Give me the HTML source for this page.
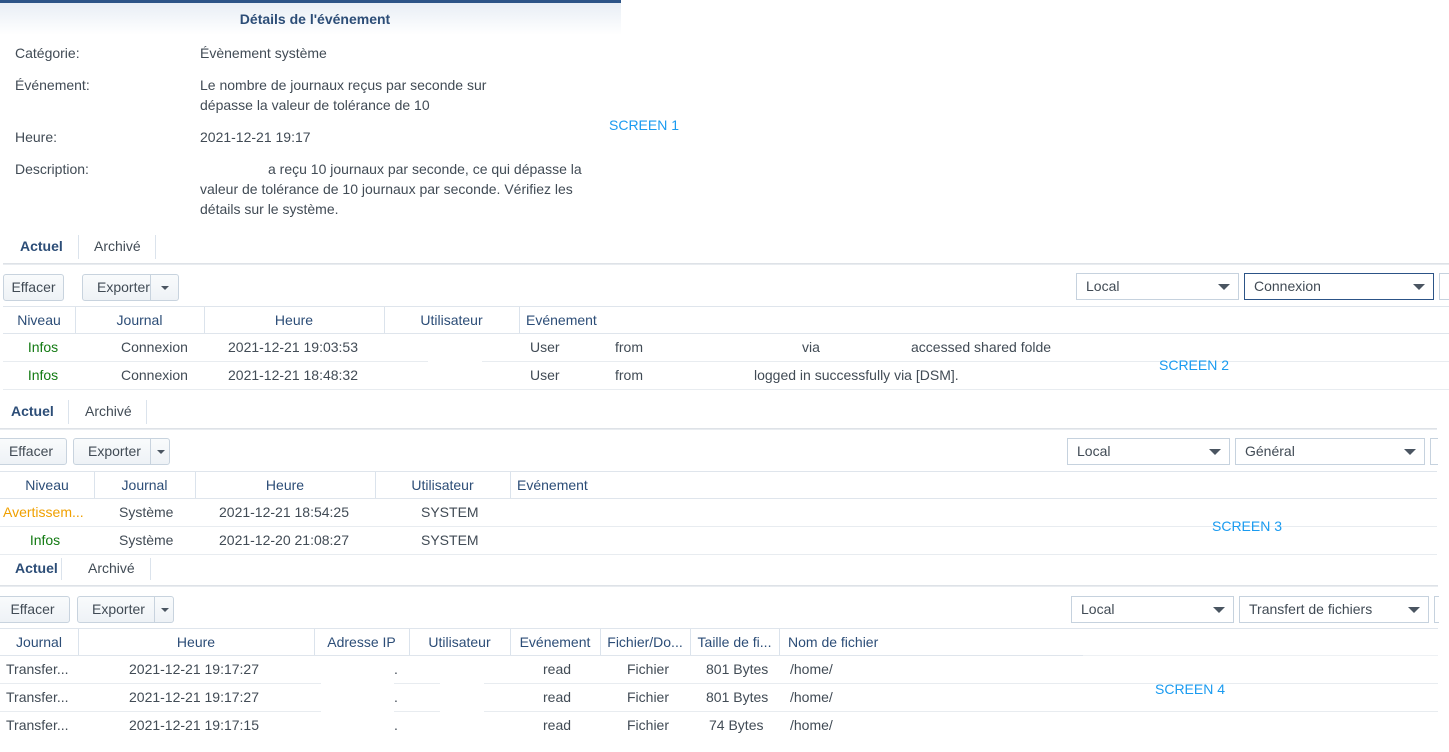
<!DOCTYPE html>
<html><head><meta charset="utf-8"><style>
body{margin:0;width:1449px;height:752px;background:#fff;position:relative;overflow:hidden;font-family:"Liberation Sans","DejaVu Sans",sans-serif;font-size:14px;color:#414b55}
div{position:absolute;box-sizing:border-box}
.t{white-space:nowrap;line-height:16px}
.c{text-align:center}
.h{color:#2c4d77}
.hl{height:1px;background:#dfe5ec}
.rl{height:1px;background:#e8ecf0}
.vl{width:1px;background:#dbe3ec}
.btn{border:1px solid #c8d3de;border-radius:3px;background:linear-gradient(#f9fbfc,#eef2f6);height:27px;line-height:25px;text-align:center;color:#414b55}
.dd{border:1px solid #c6d2de;height:27px;line-height:25px;padding-left:9px;color:#414b55;background:#fff}
.dd:after{content:"";position:absolute;right:8px;top:10px;border-left:6px solid transparent;border-right:6px solid transparent;border-top:6px solid #4a5561}
.dd.n:after{display:none}
.caret{position:absolute;left:50%;top:11px;margin-left:-4px;border-left:4px solid transparent;border-right:4px solid transparent;border-top:4px solid #4a5561}
.tb{font-weight:bold;color:#2c4d77}
.tabline{height:2px;background:linear-gradient(#d9dde2,#eef1f4)}
.g{color:#127a12}
.o{color:#f0a000}
.s{color:#1a9bf0}
</style></head><body>
<!-- SCREEN 1 -->
<div style="left:0;top:0;width:621px;height:3px;background:#2c5487"></div>
<div style="left:0;top:3px;width:621px;height:32px;background:linear-gradient(#e8eef5,#fff)"></div>
<div class="t c tb" style="left:0;top:11px;width:630px">Détails de l'événement</div>
<div class="t" style="left:15px;top:45px">Catégorie:</div>
<div class="t" style="left:200px;top:45px">Évènement système</div>
<div class="t" style="left:15px;top:77px">Événement:</div>
<div class="t" style="left:200px;top:77px">Le nombre de journaux reçus par seconde sur</div>
<div class="t" style="left:200px;top:97px">dépasse la valeur de tolérance de 10</div>
<div class="t" style="left:15px;top:129px">Heure:</div>
<div class="t" style="left:200px;top:129px">2021-12-21 19:17</div>
<div class="t" style="left:15px;top:161px">Description:</div>
<div class="t" style="left:268px;top:161px">a reçu 10 journaux par seconde, ce qui dépasse la</div>
<div class="t" style="left:200px;top:181px">valeur de tolérance de 10 journaux par seconde. Vérifiez les</div>
<div class="t" style="left:200px;top:201px">détails sur le système.</div>
<div class="t s" style="left:609px;top:117px">SCREEN 1</div>

<!-- SCREEN 2 -->
<div class="t tb" style="left:20px;top:238px">Actuel</div>
<div class="vl" style="left:78px;top:235px;height:24px"></div>
<div class="t" style="left:94px;top:238px">Archivé</div>
<div class="vl" style="left:155px;top:235px;height:24px"></div>
<div class="tabline" style="left:3px;top:263px;width:1446px"></div>
<div class="btn" style="left:3px;top:274px;width:61px">Effacer</div>
<div class="btn" style="left:82px;top:274px;width:97px;text-align:left;padding-left:14px">Exporter<div style="left:67px;top:0;width:1px;height:25px;background:#c8d3de"></div><div style="left:68px;top:0;width:28px;height:25px"><span class="caret"></span></div></div>
<div class="dd" style="left:1076px;top:273px;width:163px">Local</div>
<div class="dd" style="left:1244px;top:273px;width:190px;border-color:#2c5487">Connexion</div>
<div class="dd n" style="left:1439px;top:273px;width:20px"></div>
<div class="hl" style="left:3px;top:306px;width:1446px"></div>
<div class="t c h" style="left:3px;top:312px;width:72px">Niveau</div>
<div class="vl" style="left:75px;top:307px;height:26px"></div>
<div class="t c h" style="left:75px;top:312px;width:129px">Journal</div>
<div class="vl" style="left:204px;top:307px;height:26px"></div>
<div class="t c h" style="left:204px;top:312px;width:180px">Heure</div>
<div class="vl" style="left:384px;top:307px;height:26px"></div>
<div class="t c h" style="left:384px;top:312px;width:135px">Utilisateur</div>
<div class="vl" style="left:519px;top:307px;height:26px"></div>
<div class="t h" style="left:526px;top:312px">Evénement</div>
<div class="hl" style="left:3px;top:333px;width:1446px"></div>
<div class="t c g" style="left:3px;top:339px;width:80px">Infos</div>
<div class="t" style="left:121px;top:339px">Connexion</div>
<div class="t" style="left:228px;top:339px">2021-12-21 19:03:53</div>
<div class="t" style="left:530px;top:339px">User</div>
<div class="t" style="left:615px;top:339px">from</div>
<div class="t" style="left:802px;top:339px">via</div>
<div class="t" style="left:911px;top:339px">accessed shared folde</div>
<div class="rl" style="left:3px;top:361px;width:425px"></div>
<div class="rl" style="left:482px;top:361px;width:967px"></div>
<div class="t c g" style="left:3px;top:367px;width:80px">Infos</div>
<div class="t" style="left:121px;top:367px">Connexion</div>
<div class="t" style="left:228px;top:367px">2021-12-21 18:48:32</div>
<div class="t" style="left:530px;top:367px">User</div>
<div class="t" style="left:615px;top:367px">from</div>
<div class="t" style="left:754px;top:367px">logged in successfully via [DSM].</div>
<div class="rl" style="left:3px;top:389px;width:1446px"></div>
<div class="t s" style="left:1159px;top:357px">SCREEN 2</div>

<!-- SCREEN 3 -->
<div class="t tb" style="left:11px;top:403px">Actuel</div>
<div class="vl" style="left:68px;top:400px;height:24px"></div>
<div class="t" style="left:85px;top:403px">Archivé</div>
<div class="vl" style="left:146px;top:400px;height:24px"></div>
<div class="tabline" style="left:0;top:428px;width:1437px"></div>
<div class="btn" style="left:-5px;top:438px;width:72px">Effacer</div>
<div class="btn" style="left:73px;top:438px;width:97px;text-align:left;padding-left:14px">Exporter<div style="left:76px;top:0;width:1px;height:25px;background:#c8d3de"></div><div style="left:77px;top:0;width:19px;height:25px"><span class="caret"></span></div></div>
<div class="dd" style="left:1067px;top:438px;width:163px">Local</div>
<div class="dd" style="left:1235px;top:438px;width:190px">Général</div>
<div class="dd n" style="left:1430px;top:438px;width:20px"></div>
<div style="left:1438px;top:430px;width:11px;height:130px;background:#fff"></div>
<div class="hl" style="left:0;top:471px;width:1437px"></div>
<div class="t c h" style="left:0;top:477px;width:94px">Niveau</div>
<div class="vl" style="left:94px;top:472px;height:26px"></div>
<div class="t c h" style="left:94px;top:477px;width:101px">Journal</div>
<div class="vl" style="left:195px;top:472px;height:26px"></div>
<div class="t c h" style="left:195px;top:477px;width:180px">Heure</div>
<div class="vl" style="left:375px;top:472px;height:26px"></div>
<div class="t c h" style="left:375px;top:477px;width:135px">Utilisateur</div>
<div class="vl" style="left:510px;top:472px;height:26px"></div>
<div class="t h" style="left:517px;top:477px">Evénement</div>
<div class="hl" style="left:0;top:498px;width:1437px"></div>
<div class="t o" style="left:3px;top:504px;width:90px;overflow:hidden">Avertissem...</div>
<div class="t" style="left:119px;top:504px">Système</div>
<div class="t" style="left:219px;top:504px">2021-12-21 18:54:25</div>
<div class="t" style="left:421px;top:504px">SYSTEM</div>
<div class="rl" style="left:0;top:526px;width:1437px"></div>
<div class="t c g" style="left:0;top:532px;width:90px">Infos</div>
<div class="t" style="left:119px;top:532px">Système</div>
<div class="t" style="left:219px;top:532px">2021-12-20 21:08:27</div>
<div class="t" style="left:421px;top:532px">SYSTEM</div>
<div class="rl" style="left:0;top:554px;width:1437px"></div>
<div class="t s" style="left:1212px;top:518px">SCREEN 3</div>

<!-- SCREEN 4 -->
<div class="t tb" style="left:15px;top:560px">Actuel</div>
<div class="vl" style="left:61px;top:558px;height:22px"></div>
<div class="t" style="left:88px;top:560px">Archivé</div>
<div class="vl" style="left:150px;top:558px;height:22px"></div>
<div class="tabline" style="left:0;top:585px;width:1438px"></div>
<div class="btn" style="left:-5px;top:596px;width:75px">Effacer</div>
<div class="btn" style="left:77px;top:596px;width:97px;text-align:left;padding-left:14px">Exporter<div style="left:76px;top:0;width:1px;height:25px;background:#c8d3de"></div><div style="left:77px;top:0;width:19px;height:25px"><span class="caret"></span></div></div>
<div class="dd" style="left:1071px;top:596px;width:163px">Local</div>
<div class="dd" style="left:1239px;top:596px;width:190px">Transfert de fichiers</div>
<div class="dd n" style="left:1434px;top:596px;width:20px"></div>
<div style="left:1439px;top:587px;width:10px;height:165px;background:#fff"></div>
<div class="hl" style="left:0;top:628px;width:1438px"></div>
<div class="t c h" style="left:0;top:634px;width:78px">Journal</div>
<div class="vl" style="left:78px;top:629px;height:26px"></div>
<div class="t c h" style="left:78px;top:634px;width:236px">Heure</div>
<div class="vl" style="left:314px;top:629px;height:26px"></div>
<div class="t c h" style="left:314px;top:634px;width:95px">Adresse IP</div>
<div class="vl" style="left:409px;top:629px;height:26px"></div>
<div class="t c h" style="left:409px;top:634px;width:101px">Utilisateur</div>
<div class="vl" style="left:510px;top:629px;height:26px"></div>
<div class="t c h" style="left:510px;top:634px;width:90px">Evénement</div>
<div class="vl" style="left:600px;top:629px;height:26px"></div>
<div class="t c h" style="left:600px;top:634px;width:90px">Fichier/Do...</div>
<div class="vl" style="left:690px;top:629px;height:26px"></div>
<div class="t c h" style="left:690px;top:634px;width:89px">Taille de fi...</div>
<div class="vl" style="left:779px;top:629px;height:26px"></div>
<div class="t h" style="left:788px;top:634px">Nom de fichier</div>
<div class="hl" style="left:0;top:655px;width:1083px"></div>
<div class="hl" style="left:1083px;top:655px;width:355px;background:#eef1f4"></div>
<div class="t" style="left:6px;top:661px">Transfer...</div>
<div class="t" style="left:129px;top:661px">2021-12-21 19:17:27</div>
<div class="t" style="left:394px;top:661px">.</div>
<div class="t" style="left:543px;top:661px">read</div>
<div class="t" style="left:627px;top:661px">Fichier</div>
<div class="t" style="left:706px;top:661px">801 Bytes</div>
<div class="t" style="left:790px;top:661px">/home/</div>
<div class="rl" style="left:0;top:683px;width:321px"></div>
<div class="rl" style="left:394px;top:683px;width:46px"></div>
<div class="rl" style="left:484px;top:683px;width:599px"></div>
<div class="rl" style="left:1083px;top:683px;width:355px"></div>
<div class="t" style="left:6px;top:689px">Transfer...</div>
<div class="t" style="left:129px;top:689px">2021-12-21 19:17:27</div>
<div class="t" style="left:394px;top:689px">.</div>
<div class="t" style="left:543px;top:689px">read</div>
<div class="t" style="left:627px;top:689px">Fichier</div>
<div class="t" style="left:706px;top:689px">801 Bytes</div>
<div class="t" style="left:790px;top:689px">/home/</div>
<div class="rl" style="left:0;top:711px;width:321px"></div>
<div class="rl" style="left:394px;top:711px;width:46px"></div>
<div class="rl" style="left:484px;top:711px;width:599px"></div>
<div class="rl" style="left:1083px;top:711px;width:355px"></div>
<div class="t" style="left:6px;top:717px">Transfer...</div>
<div class="t" style="left:129px;top:717px">2021-12-21 19:17:15</div>
<div class="t" style="left:394px;top:717px">.</div>
<div class="t" style="left:543px;top:717px">read</div>
<div class="t" style="left:627px;top:717px">Fichier</div>
<div class="t" style="left:709px;top:717px">74 Bytes</div>
<div class="t" style="left:790px;top:717px">/home/</div>
<div class="t s" style="left:1155px;top:681px">SCREEN 4</div>
</body></html>
